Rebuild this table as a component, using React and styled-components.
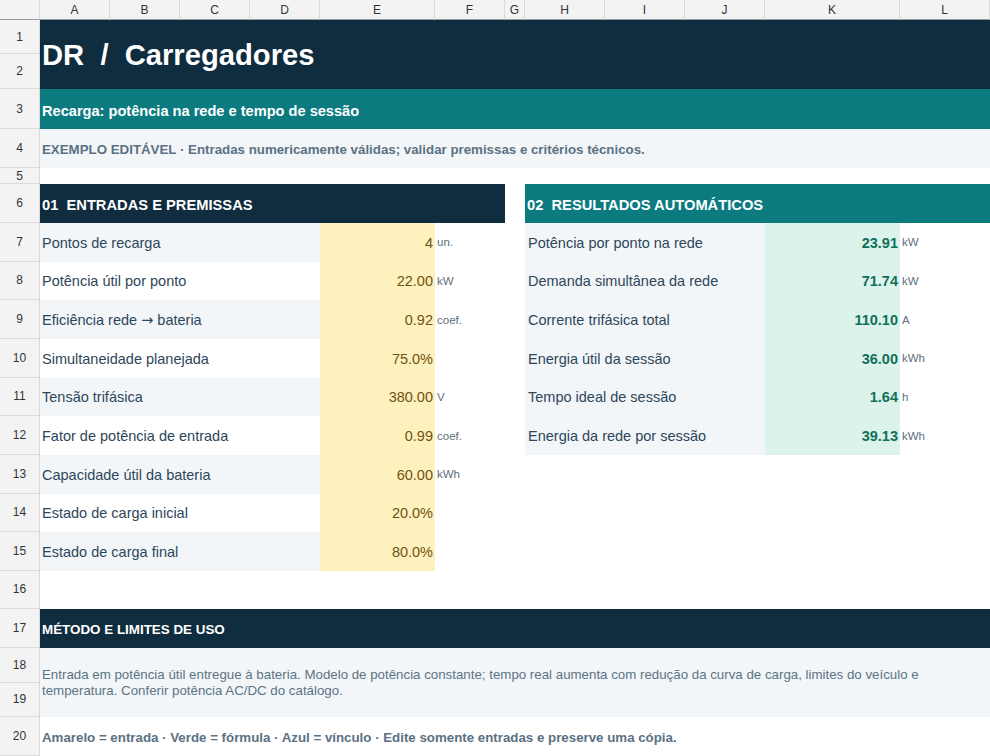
import React from "react";
import styled, { createGlobalStyle } from "styled-components";

const Global = createGlobalStyle`
  html, body {
    margin: 0;
    padding: 0;
    background: #ffffff;
    overflow: hidden;
  }
  * { box-sizing: border-box; }
`;

const NAVY = "#102c3f";
const TEAL = "#0b7b80";
const LIGHT = "#f2f6f9";
const YELLOW = "#fff1bd";
const GREEN = "#dcf3ec";

const Sheet = styled.div`
  display: grid;
  grid-template-columns: 40px 70px 70px 70px 70px 115px 70px 20px 80px 80px 80px 135px 90px;
  grid-template-rows: 20px 34px 35px 40px 39px 16px 39px repeat(9, 38.67px) 38px 39px 35px 34px 39px;
  width: 990px;
  height: 756px;
  font-family: "Liberation Sans", Arial, sans-serif;
  color: #2e4659;
`;

const place = (p) => `
  grid-column: ${p.$c} / span ${p.$cs || 1};
  grid-row: ${p.$r} / span ${p.$rs || 1};
`;

const Corner = styled.div`
  ${place}
  background: #f3f3f3;
  border-right: 1px solid #dadada;
  border-bottom: 1px solid #8d9aa3;
`;

const ColHead = styled.div`
  ${place}
  background: #f3f3f3;
  border-right: 1px solid #dadada;
  border-bottom: 1px solid #8d9aa3;
  display: flex;
  align-items: center;
  justify-content: center;
  font-size: 12px;
  color: #333;
`;

const RowHead = styled.div`
  ${place}
  background: #f3f3f3;
  border-right: 1px solid #dadada;
  border-bottom: 1px solid #dadada;
  display: flex;
  align-items: center;
  justify-content: center;
  font-size: 12px;
  color: #333;
`;

const Band = styled.div`
  ${place}
  background: ${(p) => p.$bg || "transparent"};
  display: flex;
  align-items: center;
  padding-left: 2px;
  white-space: pre;
  overflow: hidden;
`;

const Title = styled(Band)`
  font-size: 29.2px;
  font-weight: 700;
  color: #ffffff;
  padding-top: 2px;
`;

const Subtitle = styled(Band)`
  font-size: 14.6px;
  font-weight: 700;
  color: #ffffff;
  padding-top: 4px;
`;

const Notice = styled(Band)`
  font-size: 13.3px;
  font-weight: 700;
  color: #5b7183;
  padding-top: 2px;
`;

const SectionHead = styled(Band)`
  font-size: ${(p) => p.$size || 14.7}px;
  font-weight: 700;
  color: #ffffff;
  padding-top: 2px;
`;

const Label = styled(Band)`
  font-size: 14.5px;
  color: #2e4659;
  padding-left: ${(p) => p.$pad || 2}px;
  padding-top: 1px;
`;

const Arrow = styled.span`
  font-family: "DejaVu Sans", sans-serif;
  font-size: 14.5px;
  line-height: 1;
`;

const Value = styled(Band)`
  justify-content: flex-end;
  padding-left: 0;
  padding-right: 2px;
  padding-top: 1px;
  font-size: 14.5px;
  font-weight: ${(p) => (p.$bold ? 700 : 400)};
  color: ${(p) => (p.$bold ? "#10705a" : "#6e5412")};
`;

const Unit = styled(Band)`
  font-size: 11.5px;
  color: #5d6f7c;
`;

const Method = styled(Band)`
  font-size: 13.3px;
  color: #5d7384;
  white-space: normal;
  line-height: 16px;
  padding-top: 1px;
`;

const Legend = styled(Band)`
  font-size: 13.3px;
  font-weight: 700;
  color: #5b7183;
  padding-top: 2px;
`;

const cols = ["A", "B", "C", "D", "E", "F", "G", "H", "I", "J", "K", "L"];

const inputs = [
  ["Pontos de recarga", "4", "un."],
  ["Potência útil por ponto", "22.00", "kW"],
  [<>Eficiência rede <Arrow>→</Arrow> bateria</>, "0.92", "coef."],
  ["Simultaneidade planejada", "75.0%", ""],
  ["Tensão trifásica", "380.00", "V"],
  ["Fator de potência de entrada", "0.99", "coef."],
  ["Capacidade útil da bateria", "60.00", "kWh"],
  ["Estado de carga inicial", "20.0%", ""],
  ["Estado de carga final", "80.0%", ""],
];

const results = [
  ["Potência por ponto na rede", "23.91", "kW"],
  ["Demanda simultânea da rede", "71.74", "kW"],
  ["Corrente trifásica total", "110.10", "A"],
  ["Energia útil da sessão", "36.00", "kWh"],
  ["Tempo ideal de sessão", "1.64", "h"],
  ["Energia da rede por sessão", "39.13", "kWh"],
];

export default function App() {
  return (
    <>
      <Global />
      <Sheet>
        <Corner $c={1} $r={1} />
        {cols.map((c, i) => (
          <ColHead key={c} $c={i + 2} $r={1}>{c}</ColHead>
        ))}
        {Array.from({ length: 20 }, (_, i) => (
          <RowHead key={i} $c={1} $r={i + 2}>{i + 1}</RowHead>
        ))}

        <Title $c={2} $cs={12} $r={2} $rs={2} $bg={NAVY}>DR  /  Carregadores</Title>
        <Subtitle $c={2} $cs={12} $r={4} $bg={TEAL}>Recarga: potência na rede e tempo de sessão</Subtitle>
        <Notice $c={2} $cs={12} $r={5} $bg={LIGHT}>
          EXEMPLO EDITÁVEL · Entradas numericamente válidas; validar premissas e critérios técnicos.
        </Notice>

        <SectionHead $c={2} $cs={6} $r={7} $bg={NAVY}>01  ENTRADAS E PREMISSAS</SectionHead>
        <SectionHead $c={9} $cs={5} $r={7} $bg={TEAL}>02  RESULTADOS AUTOMÁTICOS</SectionHead>

        {inputs.map(([label, value, unit], i) => {
          const r = i + 8;
          return (
            <React.Fragment key={r}>
              <Label $c={2} $cs={4} $r={r} $bg={i % 2 === 0 ? LIGHT : "#ffffff"}>{label}</Label>
              <Value $c={6} $r={r} $bg={YELLOW}>{value}</Value>
              <Unit $c={7} $r={r}>{unit}</Unit>
            </React.Fragment>
          );
        })}

        {results.map(([label, value, unit], i) => {
          const r = i + 8;
          return (
            <React.Fragment key={r}>
              <Label $c={9} $cs={3} $r={r} $pad={3} $bg={LIGHT}>{label}</Label>
              <Value $c={12} $r={r} $bold $bg={GREEN}>{value}</Value>
              <Unit $c={13} $r={r}>{unit}</Unit>
            </React.Fragment>
          );
        })}

        <SectionHead $c={2} $cs={12} $r={18} $size={13.4} $bg={NAVY}>MÉTODO E LIMITES DE USO</SectionHead>
        <Method $c={2} $cs={12} $r={19} $rs={2} $bg={LIGHT}>
          Entrada em potência útil entregue à bateria. Modelo de potência constante; tempo real aumenta com redução da curva de carga, limites do veículo e temperatura. Conferir potência AC/DC do catálogo.
        </Method>
        <Legend $c={2} $cs={12} $r={21}>
          Amarelo = entrada · Verde = fórmula · Azul = vínculo · Edite somente entradas e preserve uma cópia.
        </Legend>
      </Sheet>
    </>
  );
}
